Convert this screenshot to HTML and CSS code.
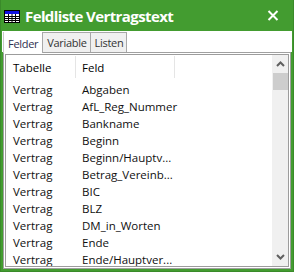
FILE: index.html
```html
<!DOCTYPE html>
<html lang="de">
<head>
  <meta charset="UTF-8">
  <title>Feldliste Vertragstext</title>
  <link rel="stylesheet" href="styles.css">
</head>
<body>
  <div class="window">
    <div class="titlebar">
      <svg class="app-icon" width="16" height="13" viewBox="0 0 16 13">
        <rect x="0.5" y="0.5" width="15" height="12" fill="#fff" stroke="#000"/>
        <rect x="1" y="1" width="14" height="3" fill="#1010e0"/>
        <path d="M1 6.5H15M1 8.5H15M1 10.5H15M4.5 4V12M8 4V12M11.5 4V12" stroke="#000" stroke-width="1"/>
      </svg>
      <span class="title">Feldliste Vertragstext</span>
      <svg class="close" width="12" height="11" viewBox="0 0 12 11">
        <path d="M1.5 1L10.5 10M10.5 1L1.5 10" stroke="#fff" stroke-width="2"/>
      </svg>
    </div>
    <div class="tabs">
      <span class="tab active">Felder</span>
      <span class="tab">Variable</span>
      <span class="tab">Listen</span>
    </div>
    <div class="page">
      <div class="list">
        <div class="rows">
          <div class="row head"><span class="c1">Tabelle</span><span class="c2">Feld</span><span class="c3"></span></div>
          <div class="row"><span class="c1">Vertrag</span><span class="c2">Abgaben</span></div>
          <div class="row"><span class="c1">Vertrag</span><span class="c2">AfL_Reg_Nummer</span></div>
          <div class="row"><span class="c1">Vertrag</span><span class="c2">Bankname</span></div>
          <div class="row"><span class="c1">Vertrag</span><span class="c2">Beginn</span></div>
          <div class="row"><span class="c1">Vertrag</span><span class="c2">Beginn/Hauptv...</span></div>
          <div class="row"><span class="c1">Vertrag</span><span class="c2">Betrag_Vereinb...</span></div>
          <div class="row"><span class="c1">Vertrag</span><span class="c2">BIC</span></div>
          <div class="row"><span class="c1">Vertrag</span><span class="c2">BLZ</span></div>
          <div class="row"><span class="c1">Vertrag</span><span class="c2">DM_in_Worten</span></div>
          <div class="row"><span class="c1">Vertrag</span><span class="c2">Ende</span></div>
          <div class="row"><span class="c1">Vertrag</span><span class="c2">Ende/Hauptver...</span></div>
        </div>
        <div class="scrollbar">
          <svg class="arrow" width="9" height="6" viewBox="0 0 9 6">
            <path d="M1 5L4.5 1.5L8 5" fill="none" stroke="#606060" stroke-width="2"/>
          </svg>
          <div class="thumb"></div>
          <div class="track"></div>
          <svg class="arrow" width="9" height="6" viewBox="0 0 9 6">
            <path d="M1 1L4.5 4.5L8 1" fill="none" stroke="#606060" stroke-width="2"/>
          </svg>
        </div>
      </div>
    </div>
  </div>
</body>
</html>
```
FILE: styles.css
```css
html,
body {
  margin: 0;
  background-color: #ffffff;
  font-family: "Open Sans", "DejaVu Sans", sans-serif;
}
.window {
  width: 294px;
  height: 272px;
  box-sizing: border-box;
  background-color: #439c30;
  border: 1px solid #3a8a2a;
  border-top: 0;
  padding: 0 1px 1px 1px;
  display: flex;
  flex-direction: column;
  overflow: hidden;
}
.titlebar {
  height: 31px;
  flex: none;
  display: flex;
  align-items: center;
  padding: 0 0 0 2px;
  color: #ffffff;
}
.app-icon {
  margin-right: 5px;
  margin-top: 1px;
}
.title {
  font-weight: bold;
  font-size: 15px;
  letter-spacing: -0.6px;
  flex: 1;
}
.close {
  margin-right: 13px;
}
.tabs {
  background-color: #ffffff;
  display: flex;
  align-items: flex-end;
  height: 21px;
  flex: none;
  font-size: 11px;
  letter-spacing: -0.3px;
  padding-left: 1px;
}
.tab {
  height: 19px;
  line-height: 19px;
  padding: 0 3px 0 4px;
  background-color: #f0f0f0;
  border: 1px solid #a8a8a8;
  border-bottom: 0;
  border-left: 0;
  color: #333333;
}
.tab.active {
  height: 21px;
  line-height: 23px;
  background-color: #ffffff;
  border-left: 1px solid #c8c8c8;
  border-right: 1px solid #a8a8a8;
  border-top: 0;
  color: #303050;
  padding: 0 4px 0 4px;
  position: relative;
  z-index: 1;
  margin-bottom: -1px;
}
.page {
  flex: 1;
  background-color: #ffffff;
  border: 1px solid #a0a0a0;
  margin: 0 1px 1px 1px;
  padding: 1px;
  display: flex;
  min-height: 0;
}
.list {
  flex: 1;
  border: 1px solid #9c9c9c;
  display: flex;
  min-height: 0;
}
.rows {
  flex: 1;
  overflow: hidden;
}
.row {
  display: flex;
  height: 17px;
  line-height: 17px;
  font-size: 11.5px;
  color: #101010;
  white-space: nowrap;
}
.row.head {
  height: 25px;
  line-height: 24px;
  margin-bottom: 1px;
  color: #000000;
}
.c1 {
  width: 63px;
  padding-left: 7px;
  flex: none;
}
.c2 {
  width: 93px;
  padding-left: 6px;
  flex: none;
}
.head .c1,
.head .c2 {
  border-right: 1px solid #e5e5e5;
  height: 22px;
  margin-top: 1px;
}
.head .c1 {
  width: 62px;
}
.head .c2 {
  width: 92px;
}
.scrollbar {
  width: 16px;
  background-color: #f0f0f0;
  display: flex;
  flex-direction: column;
  align-items: center;
}
.arrow {
  margin: 6px 0;
}
.thumb {
  width: 15px;
  height: 17px;
  background-color: #cdcdcd;
}
.track {
  flex: 1;
}
```
